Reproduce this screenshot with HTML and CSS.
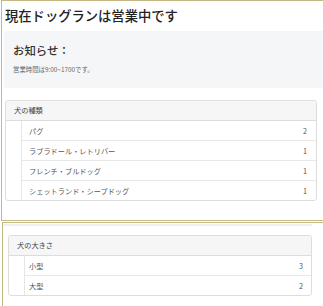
FILE: index.html
```html
<!DOCTYPE html>
<html lang="ja">
<head>
    <meta charset="UTF-8">
    <meta name="viewport" content="width=device-width, initial-scale=1.0">
    <title>ドッグラン</title>
    <link rel="stylesheet" href="styles.css">
</head>
<body>

    <div class="frame frame-top">
        <h1 class="title">現在ドッグランは営業中です</h1>

        <div class="notice">
            <h2>お知らせ：</h2>
            <p>営業時間は9:00~1700です。</p>
        </div>

        <!-- 犬の種類 -->
        <div class="card card-breeds">
            <div class="card-header">犬の種類</div>
            <ul class="list">
                <li><span>パグ</span><span>2</span></li>
                <li><span>ラブラドール・レトリバー</span><span>1</span></li>
                <li><span>フレンチ・ブルドッグ</span><span>1</span></li>
                <li><span>シェットランド・シープドッグ</span><span>1</span></li>
            </ul>
        </div>
    </div>

    <div class="frame frame-bottom">
        <div class="strip"></div>

        <!-- 犬の大きさ -->
        <div class="card card-sizes">
            <div class="card-header">犬の大きさ</div>
            <ul class="list">
                <li><span>小型</span><span>3</span></li>
                <li><span>大型</span><span>2</span></li>
            </ul>
        </div>
    </div>

</body>
</html>
```

FILE: styles.css
```css
body {
    margin: 0;
    font-family: "Noto Sans CJK JP", "Noto Sans", sans-serif;
    background-color: white;
    color: #212529;
}

.frame {
    border-top: 1px solid #c4b984;
    border-left: 1px solid #c4b984;
}

.frame-top {
    margin-left: 1px;
    height: 219px;
    border-bottom: 1px solid #c4b984;
    padding-left: 2px;
}

.frame-bottom {
    margin-top: 1px;
    margin-left: 2px;
    height: 90px;
}

.title {
    margin: 5px 0 0 1px;
    font-size: 13.3px;
    line-height: 20px;
    font-weight: 500;
    color: #222;
}

.notice {
    margin-top: 5px;
    padding: 11px 9px 13px;
    background-color: #f5f6f8;
    border-radius: 3px 0 0 3px;
}

.notice h2 {
    margin: 0;
    font-size: 11.4px;
    line-height: 16px;
    font-weight: 500;
    color: #333;
}

.notice p {
    margin: 7px 0 0;
    font-size: 6.4px;
    line-height: 10px;
    color: #666;
}

.card {
    border: 1px solid #dedede;
    border-radius: 3px;
    background-color: white;
    font-size: 7.2px;
}

.card-breeds {
    margin: 12px 0 0 1px;
    width: 310px;
}

.card-sizes {
    margin: 9px 0 0 5px;
    width: 302px;
}

.card-header {
    height: 19px;
    line-height: 19px;
    padding-left: 8px;
    background-color: #f6f6f6;
    border-bottom: 1px solid #dcdcdc;
    border-radius: 3px 3px 0 0;
    color: #444;
}

.list {
    list-style: none;
    margin: 0 0 0 15px;
    padding: 0;
    border-left: 1px solid #e6e6e6;
}

.list li {
    display: flex;
    justify-content: space-between;
    align-items: center;
    height: 19px;
    padding: 0 9px 0 7px;
    border-bottom: 1px solid #e8e8e8;
    color: #555;
}

.card-sizes .list li {
    padding: 0 8px 0 4px;
}

.list li:last-child {
    border-bottom: none;
}

.strip {
    margin-top: 1px;
    width: 309px;
    height: 2px;
    background-color: #f0f0f0;
}
```
